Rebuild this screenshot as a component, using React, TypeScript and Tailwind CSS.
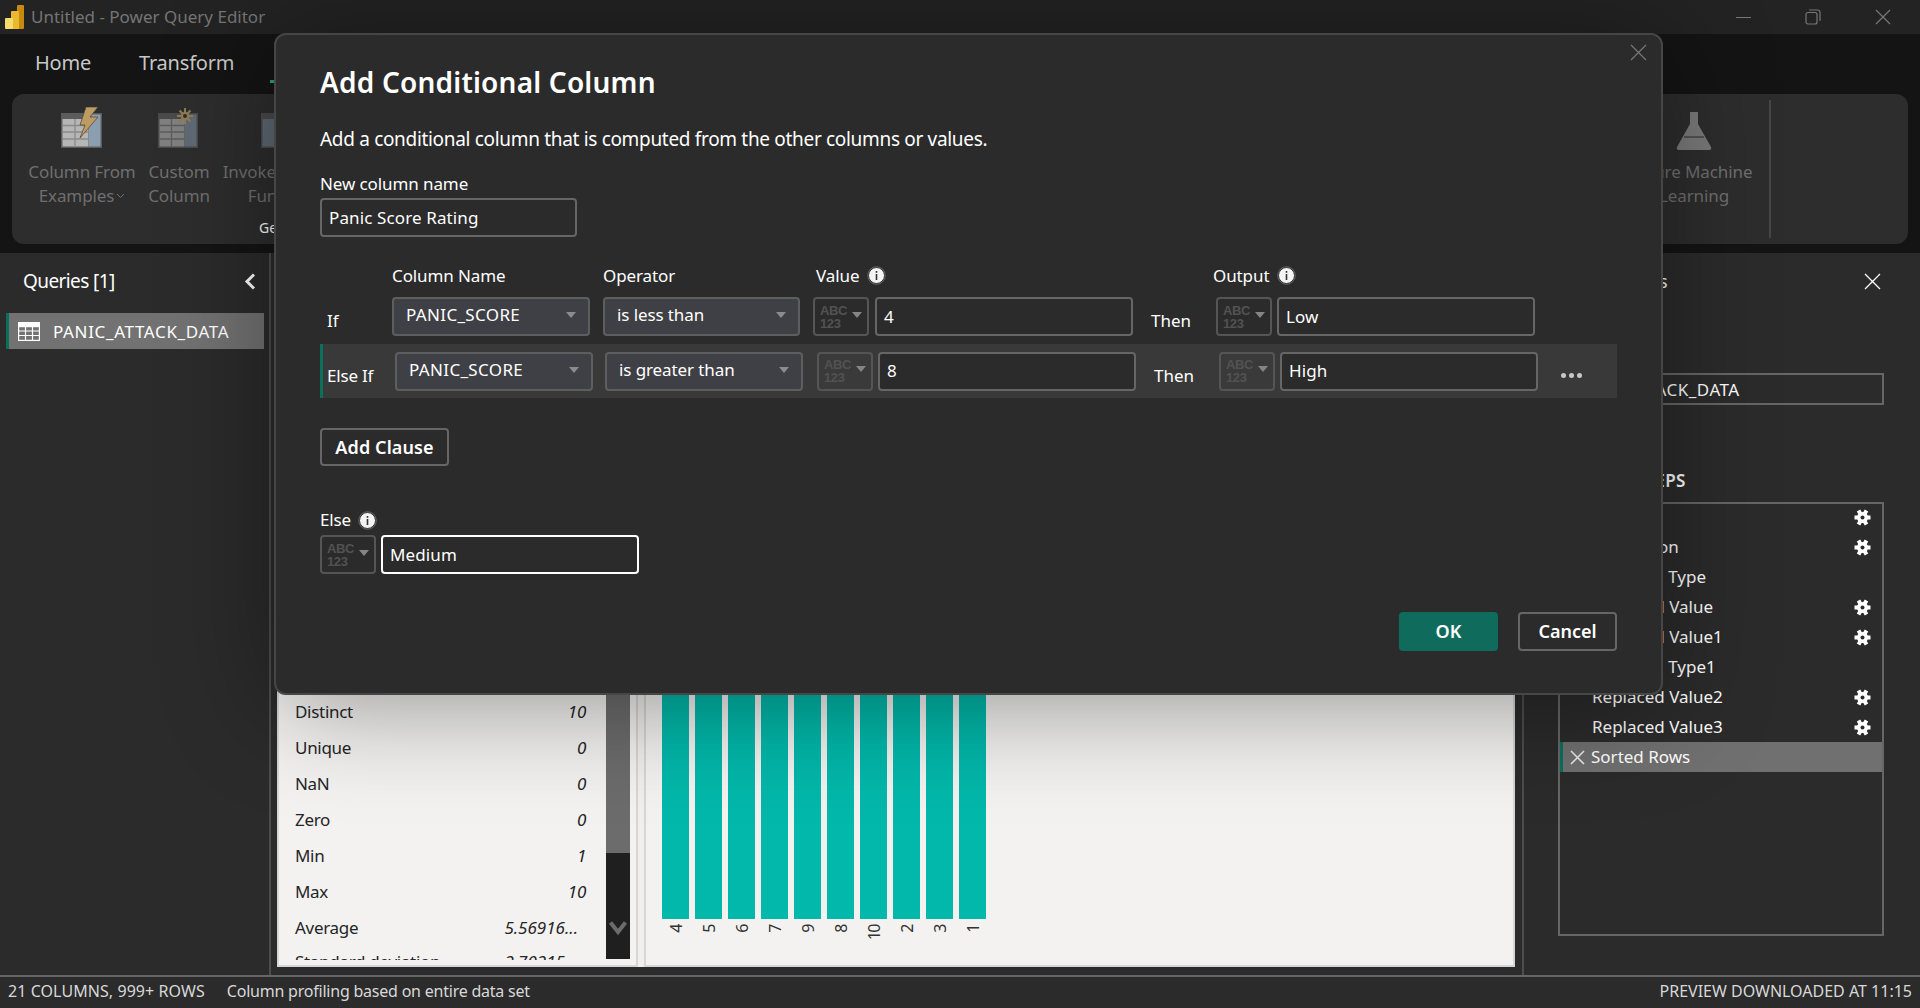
import React from "react";

const Caret = ({ c = "#8c8c8c" }: { c?: string }) => (
  <svg width="10" height="6" viewBox="0 0 10 6" className="shrink-0"><path d="M0 0h10L5 6z" fill={c} /></svg>
);

const Info = () => (
  <svg width="19" height="19" viewBox="0 0 19 19" className="shrink-0">
    <circle cx="9.500" cy="9.500" r="8" fill="#f4f4f4" stroke="#2b2b2b" />
    <circle cx="9.500" cy="9.500" r="8.800" fill="none" stroke="#9a9a9a" strokeWidth="0.5" />
    <rect x="8.700" y="8" width="1.600" height="6" fill="#333" />
    <rect x="8.700" y="5" width="1.600" height="1.800" fill="#333" />
  </svg>
);

const Gear = () => (
  <svg width="17" height="17" viewBox="0 0 17 17" className="shrink-0">
    <g stroke="#fff" strokeWidth="4">
      <path d="M0.500 8.500h16M4.500 1.600l8 13.800M12.500 1.600l-8 13.800" />
    </g>
    <circle cx="8.500" cy="8.500" r="5.500" fill="#fff" />
    <circle cx="8.500" cy="8.500" r="2" fill="#2b2b2b" />
  </svg>
);

const Select = ({ text, w = "w-[198px]", t = "tracking-[-0.1px]" }: { text: string; w?: string; t?: string }) => (
  <div className={`${w} h-[39px] shrink-0 bg-[#3f4045] border-2 border-[#5e5e5e] rounded-[4px] flex items-center justify-between pl-[12px] pr-[12px] text-white text-[17px] pb-[3px] ${t}`}>
    <span>{text}</span>
    <Caret />
  </div>
);

const TypeBox = ({ dim }: { dim?: boolean }) => (
  <div className={`w-[56px] h-[39px] shrink-0 border-2 rounded-[4px] flex items-center pl-[5px] gap-[5px] ${dim ? "border-[#555] bg-[#3a3a3a]" : "border-[#555]"}`}>
    <div className="font-['Liberation_Sans',sans-serif] text-[13px] leading-[13px] font-bold text-[#525252] tracking-[-0.4px]">
      <div>ABC</div>
      <div>123</div>
    </div>
    <div className="mb-[4px]"><Caret c="#858585" /></div>
  </div>
);

const TextIn = ({ text, w = "w-[258px]", focus }: { text: string; w?: string; focus?: boolean }) => (
  <div className={`${w} h-[39px] shrink-0 bg-[#2b2b2b] border-2 rounded-[4px] flex items-center pl-[7px] text-white text-[17px] tracking-[0.12px] ${focus ? "border-white" : "border-[#666]"}`}>
    {text}
  </div>
);

const Bolt = () => (
  <svg width="42" height="42" viewBox="0 0 42 42">
    <rect x="0" y="6" width="41" height="35" fill="#5c5c5c" />
    <rect x="1.500" y="12" width="26" height="27.500" fill="#b6b6b6" />
    <path d="M1.500 18.500h26M1.500 25h26M1.500 32h26M14 12v27.500" stroke="#8a8a8a" strokeWidth="1.300" />
    <rect x="28" y="7.500" width="11.500" height="32" fill="#8c9fb1" />
    <path d="M25 0h12l-8 10h8L19 31l5-13h-5z" fill="#bc9c62" stroke="#4b4032" strokeWidth="0.700" />
  </svg>
);

const CustomIcon = () => (
  <svg width="42" height="42" viewBox="0 0 42 42">
    <rect x="0" y="6" width="40" height="35" fill="#4a4a4a" />
    <rect x="1.500" y="12" width="25" height="27.500" fill="#808080" />
    <path d="M1.500 18.500h25M1.500 25h25M1.500 32h25M13.500 12v27.500" stroke="#5c5c5c" strokeWidth="1.300" />
    <rect x="27" y="7.500" width="11.500" height="32" fill="#5f6a75" />
    <g stroke="#8f7c55" strokeWidth="2">
      <path d="M27 1v16M19 9h16M21.500 3.500l11 11M32.500 3.500l-11 11" />
    </g>
    <circle cx="27" cy="9" r="4" fill="#8f7c55" />
    <circle cx="27" cy="9" r="2" fill="#2d2d2d" />
  </svg>
);

const InvokeIcon = () => (
  <svg width="42" height="42" viewBox="0 0 42 42">
    <rect x="0" y="6" width="41" height="35" fill="#4a4a4a" />
    <rect x="1.500" y="12" width="38" height="27.500" fill="#5f6a75" />
  </svg>
);

const Flask = () => (
  <svg width="36" height="39" viewBox="0 0 36 39" className="mb-[-2px]">
    <path d="M14 0h8v12l13 23q1 3-2 3H3q-3 0-2-3L14 12z" fill="#7a7a7a" />
    <path d="M8 25h20" stroke="#2c2c2c" strokeWidth="1" />
  </svg>
);

const RibbonBtn = ({ icon, l1, l2, w, chevron }: { icon: React.ReactNode; l1: string; l2: string; w: string; chevron?: boolean }) => (
  <div className={`${w} shrink-0 flex flex-col items-center`}>
    <div className="h-[49px] flex items-end">{icon}</div>
    <div className="mt-[11px] text-[17px] leading-[24px] text-[#6f6f6f] tracking-[-0.1px] whitespace-nowrap text-center">
      <div>{l1}</div>
      <div className="flex items-center justify-center gap-[2px]">
        {l2}
        {chevron && (
          <svg width="9" height="6" viewBox="0 0 9 6" fill="none" stroke="#6f6f6f" strokeWidth="1"><path d="M1 1l3.500 3.500L8 1" /></svg>
        )}
      </div>
    </div>
  </div>
);

const steps: [string, boolean][] = [
  ["Source", true],
  ["Navigation", true],
  ["Changed Type", false],
  ["Replaced Value", true],
  ["Replaced Value1", true],
  ["Changed Type1", false],
  ["Replaced Value2", true],
  ["Replaced Value3", true],
];

const stats: [string, string, boolean][] = [
  ["Distinct", "10", false],
  ["Unique", "0", false],
  ["NaN", "0", false],
  ["Zero", "0", false],
  ["Min", "1", false],
  ["Max", "10", false],
  ["Average", "5.56916...", true],
  ["Standard deviation", "2.70215...", true],
];

const bars = ["4", "5", "6", "7", "9", "8", "10", "2", "3", "1"];

export default function App() {
  return (
    <div className="relative w-[1920px] h-[1008px] overflow-hidden bg-[#2b2b2b] flex flex-col font-['Noto_Sans','Open_Sans',sans-serif] text-white">
      {/* Title bar */}
      <div className="h-[34px] shrink-0 bg-[#232323] flex items-center pl-[5px]">
        <svg width="19" height="25" viewBox="0 0 19 25">
          <rect x="12" y="0" width="7" height="24" rx="1" fill="#c68a0f" />
          <rect x="6" y="6" width="8" height="18" rx="1" fill="#eab92e" />
          <rect x="0" y="13" width="8" height="11" rx="1" fill="#f6dc6b" />
        </svg>
        <span className="ml-[7px] text-[17px] text-[#757575] tracking-[0px]">Untitled - Power Query Editor</span>
        <div className="ml-auto flex items-center h-full pr-[2px]">
          <div className="w-[70px] flex justify-center"><div className="w-[15px] h-px bg-[#777]" /></div>
          <div className="w-[70px] flex justify-center">
            <svg width="16" height="16" viewBox="0 0 16 16" fill="none" stroke="#777" strokeWidth="1.200"><rect x="1" y="3.500" width="11" height="11.500" rx="2" /><path d="M4 1h8.500A2.500 2.500 0 0 1 15 3.500V12" /></svg>
          </div>
          <div className="w-[70px] flex justify-center">
            <svg width="16" height="16" viewBox="0 0 16 16" stroke="#777" strokeWidth="1.200"><path d="M1 1l14 14M15 1L1 15" /></svg>
          </div>
        </div>
      </div>

      {/* Tabs */}
      <div className="h-[60px] shrink-0 bg-[#141414] flex items-start pl-[35px] pt-[14px] text-[20px] text-[#c8c8c8] tracking-[-0.2px]">
        <span className="w-[104px]">Home</span>
        <span className="w-[131px]">Transform</span>
        <span className="relative px-[16px]">
          Add Column
          <span className="absolute left-0 right-0 top-[32px] h-[3px] bg-[#2a9d84]" />
        </span>
      </div>

      {/* Ribbon */}
      <div className="h-[159px] shrink-0 bg-[#141414] pl-[12px] pr-[12px] pb-[9px]">
        <div className="h-full rounded-[12px] bg-[#2d2d2d] flex items-stretch pl-[16px] relative">
          <div className="flex items-start pt-[6px]">
            <RibbonBtn w="w-[108px]" icon={<Bolt />} l1="Column From" l2="Examples" chevron />
            <RibbonBtn w="w-[86px]" icon={<CustomIcon />} l1="Custom" l2="Column" />
            <RibbonBtn w="w-[120px]" icon={<InvokeIcon />} l1="Invoke Custom" l2="Function" />
          </div>
          <span className="absolute left-[247px] top-[124px] text-[14px] leading-[20px] text-white">General</span>
          <div className="ml-auto flex items-start pt-[6px]">
            <RibbonBtn w="w-[146px]" icon={<Flask />} l1="Azure Machine" l2="Learning" />
            <div className="ml-[2px] w-[2px] h-[138px] bg-[#474747]" />
            <div className="w-[137px]" />
          </div>
        </div>
      </div>

      {/* Main */}
      <div className="flex-1 min-h-0 flex">
        {/* Queries */}
        <div className="w-[271px] shrink-0 border-r-2 border-[#4d4d4d] pl-[6px] pr-[5px]">
          <div className="h-[60px] flex items-center justify-between pl-[17px] pr-[8px] pb-[3px] text-[19px] tracking-[-0.6px]">
            <span>Queries [1]</span>
            <svg width="12" height="17" viewBox="0 0 12 17" fill="none" stroke="#fff" strokeWidth="3"><path d="M10 1.500L3 8.500l7 7" /></svg>
          </div>
          <div className="h-[36px] bg-[#727272] border-l-[3px] border-[#0c6f5c] flex items-center pl-[9px] gap-[13px] pt-[1px] text-[17px] tracking-[0.65px] whitespace-nowrap">
            <svg width="22" height="19" viewBox="0 0 22 19" fill="none" stroke="#fff" strokeWidth="1.200">
              <rect x="0.600" y="0.600" width="20.800" height="17.800" />
              <rect x="0.600" y="0.600" width="20.800" height="4" fill="#fff" />
              <path d="M0.600 9h20.800M0.600 13.500h20.800M7.500 4.600v13.800M14.500 4.600v13.800" />
            </svg>
            <span>PANIC_ATTACK_DATA</span>
          </div>
        </div>

        {/* Center */}
        <div className="w-[1251px] shrink-0 flex flex-col justify-end pl-[6px] pr-[7px] pb-[8px]">
          <div className="h-[300px] flex gap-[6px] bg-[#f0efee]">
            <div className="w-[361px] shrink-0 h-full bg-[#f3f2f1] border-2 border-[#d6d6d6] flex text-[#252525]">
              <div className="w-[327px] h-[291px] overflow-hidden pt-[25px] pl-[16px] pr-[20px]">
                {stats.map(([k, v, long], i) => (
                  <div key={k} className={`h-[36px] flex items-center justify-between text-[17px] tracking-[-0.3px] whitespace-nowrap ${i === 7 ? "-mt-[2px]" : ""}`}>
                    <span>{k}</span>
                    <span className={`italic ${long ? "pr-[8px] tracking-[0px]" : ""}`}>{v}</span>
                  </div>
                ))}
              </div>
              <div className="w-[24px] h-[290px] bg-[#1f1f1f] flex flex-col">
                <div className="h-[184px] bg-[#6c6c6c]" />
                <div className="flex-1 flex justify-center pt-[68px]">
                  <svg width="18" height="14" viewBox="0 0 18 14" fill="none" stroke="#6c6c6c" strokeWidth="4"><path d="M1.500 1.500L9 11l7.500-9.500" /></svg>
                </div>
              </div>
            </div>
            <div className="flex-1 h-full bg-[#f3f2f1] border-2 border-[#d6d6d6] pl-[16px] flex gap-[6px]">
              {bars.map((b) => (
                <div key={b} className="w-[27px] flex flex-col items-center">
                  <div className="w-full h-[250px] bg-[#02b8aa]" />
                  <span className="mt-[6px] [writing-mode:vertical-rl] rotate-180 text-[16px] leading-[16px] tracking-[-1.500px] text-[#333]">{b}</span>
                </div>
              ))}
            </div>
          </div>
        </div>

        {/* Query settings */}
        <div className="flex-1 min-w-0 border-l-2 border-[#4d4d4d] pl-[34px] pr-[36px]">
          <div className="h-[56px] flex items-center justify-between pr-[3px] text-[18px] tracking-[-0.2px]">
            <span className="-ml-[13px]">Query Settings</span>
            <svg width="17" height="17" viewBox="0 0 17 17" stroke="#fff" strokeWidth="1.300"><path d="M1 1l15 15M16 1L1 16" /></svg>
          </div>
          <div className="mt-[64px] h-[32px] border-2 border-[#666] flex items-center pl-[6px] pt-[1px] text-[17px] tracking-[0.5px] whitespace-nowrap">PANIC_ATTACK_DATA</div>
          <div className="mt-[63px] h-[34px] text-[17px] font-semibold tracking-[0.4px]">APPLIED STEPS</div>
          <div className="h-[434px] border-2 border-[#666]">
            <div className="-mt-[2px]">
              {steps.map(([s, g]) => (
                <div key={s} className="h-[30px] flex items-center justify-between pl-[32px] pr-[11px] text-[17px] tracking-[0px]">
                  <span>{s}</span>
                  {g && <Gear />}
                </div>
              ))}
              <div className="h-[30px] bg-[#707070] border-l-[3px] border-[#0c6f5c] flex items-center pl-[7px] gap-[6px] text-[17px] tracking-[0px]">
                <svg width="15" height="15" viewBox="0 0 15 15" stroke="#e8e8e8" strokeWidth="1.600"><path d="M1 1l13 13M14 1L1 14" /></svg>
                <span>Sorted Rows</span>
              </div>
            </div>
          </div>
        </div>
      </div>

      {/* Status bar */}
      <div className="h-[33px] shrink-0 border-t-2 border-[#666] flex items-center pl-[8px] pr-[8px] pb-[3px] text-[16px] text-[#d8d8d8] whitespace-nowrap">
        <span className="tracking-[0.07px]">21 COLUMNS, 999+ ROWS</span>
        <span className="ml-[22px] tracking-[-0.22px]">Column profiling based on entire data set</span>
        <span className="ml-auto tracking-[0px]">PREVIEW DOWNLOADED AT 11:15</span>
      </div>

      {/* Dialog */}
      <div className="absolute left-[274px] top-[33px] w-[1389px] h-[662px] bg-[#2b2b2b] border-2 border-[#464646] rounded-[12px] shadow-[0_8px_110px_rgba(0,0,0,0.4)] pl-[44px] pr-[44px] pt-[27px]">
        <svg width="17" height="17" viewBox="0 0 17 17" stroke="#777" strokeWidth="1.200" className="absolute right-[14px] top-[9px]"><path d="M1 1l15 15M16 1L1 16" /></svg>
        <div className="h-[40px] flex items-center text-[28px] font-semibold tracking-[0.2px]">Add Conditional Column</div>
        <div className="mt-[23px] h-[28px] flex items-center text-[19px] tracking-[-0.32px]">Add a conditional column that is computed from the other columns or values.</div>
        <div className="mt-[18px] h-[24px] pt-[2px] flex items-center text-[17px] tracking-[-0.1px]">New column name</div>
        <div className="mt-[3px]"><TextIn text="Panic Score Rating" w="w-[257px]" /></div>

        <div className="mt-[26px] h-[24px] pt-[1px] flex items-center text-[17px] tracking-[-0.1px]">
          <span className="w-[72px]" />
          <span className="w-[211px]">Column Name</span>
          <span className="w-[213px]">Operator</span>
          <span className="w-[397px] flex items-center gap-[8px]">Value <Info /></span>
          <span className="flex items-center gap-[8px]">Output <Info /></span>
        </div>

        <div className="mt-[10px] flex items-start">
          <span className="w-[72px] pl-[7px] pt-[11px] text-[17px]">If</span>
          <Select text="PANIC_SCORE" t="tracking-[0.35px]" />
          <div className="w-[13px]" />
          <Select text="is less than" w="w-[197px]" />
          <div className="w-[13px]" />
          <TypeBox />
          <div className="w-[6px]" />
          <TextIn text="4" />
          <span className="w-[83px] pl-[18px] pt-[11px] text-[17px]">Then</span>
          <TypeBox />
          <div className="w-[5px]" />
          <TextIn text="Low" />
        </div>

        <div className="mt-[8px] h-[54px] w-[1297px] bg-[#393939] border-l-[3px] border-[#0c6f5c] flex items-center relative">
          <span className="w-[72px] pl-[4px] pt-[10px] text-[17px] tracking-[-0.2px]">Else If</span>
          <Select text="PANIC_SCORE" t="tracking-[0.35px]" />
          <div className="w-[12px]" />
          <Select text="is greater than" w="w-[198px]" />
          <div className="w-[14px]" />
          <TypeBox dim />
          <div className="w-[5px]" />
          <TextIn text="8" />
          <span className="w-[83px] pl-[18px] pt-[10px] text-[17px]">Then</span>
          <TypeBox dim />
          <div className="w-[5px]" />
          <TextIn text="High" />
          <div className="ml-[23px] mt-[8px] flex gap-[3px]">
            <div className="w-[5px] h-[5px] rounded-full bg-[#c8c8c8]" />
            <div className="w-[5px] h-[5px] rounded-full bg-[#c8c8c8]" />
            <div className="w-[5px] h-[5px] rounded-full bg-[#c8c8c8]" />
          </div>
        </div>

        <div className="mt-[30px] w-[129px] h-[38px] border-2 border-[#666] rounded-[4px] flex items-center justify-center text-[18px] font-semibold tracking-[0.1px]">Add Clause</div>

        <div className="mt-[42px] h-[24px] flex items-center gap-[7px] text-[17px] tracking-[-0.2px]">Else <Info /></div>
        <div className="mt-[3px] flex gap-[5px]">
          <TypeBox />
          <TextIn text="Medium" focus />
        </div>

        <div className="mt-[38px] flex justify-end gap-[20px]">
          <div className="w-[99px] h-[39px] rounded-[4px] bg-[#0f6b5c] flex items-center justify-center text-[18px] font-semibold">OK</div>
          <div className="w-[99px] h-[39px] rounded-[4px] border-2 border-[#666] flex items-center justify-center text-[18px] font-semibold">Cancel</div>
        </div>
      </div>
    </div>
  );
}
